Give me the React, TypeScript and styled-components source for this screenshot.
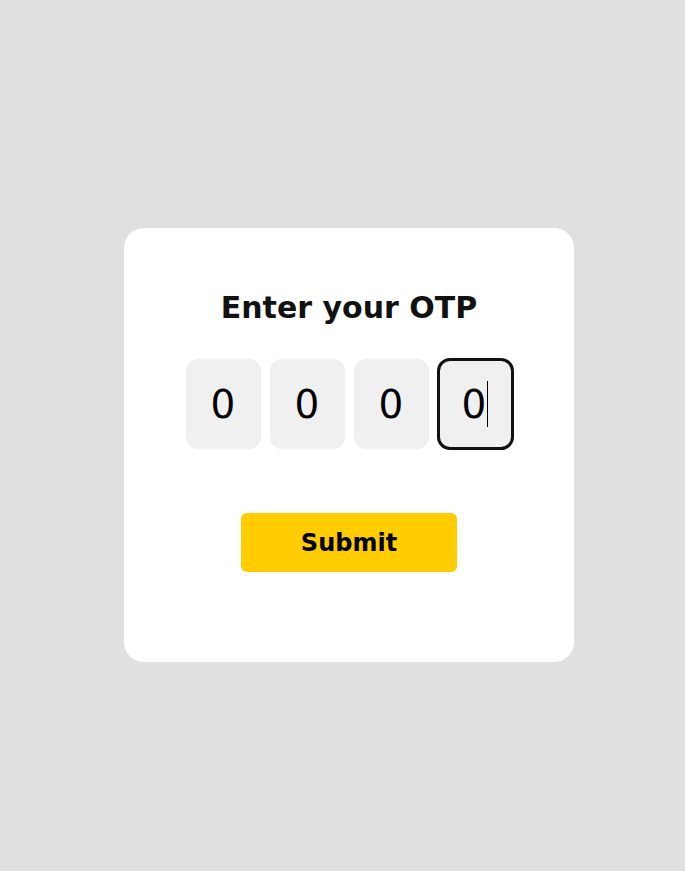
import React from "react";
import styled, { createGlobalStyle } from "styled-components";

const Global = createGlobalStyle`
  html, body { margin: 0; padding: 0; background: #e0e0e0; }
  * { box-sizing: border-box; }
`;

const Page = styled.div`
  min-height: 100vh;
  display: flex;
  align-items: center;
  justify-content: center;
  padding: 19px 0 0 13px;
  font-family: "DejaVu Sans", Verdana, sans-serif;
`;

const Card = styled.div`
  width: 450px;
  height: 434px;
  background: #ffffff;
  border-radius: 20px;
  display: flex;
  flex-direction: column;
  align-items: center;
  padding-top: 62px;
`;

const Title = styled.h2`
  margin: 0;
  font-size: 30px;
  font-weight: bold;
  color: #111;
  line-height: 35px;
`;

const Row = styled.div`
  display: flex;
  gap: 9px;
  margin-top: 34px;
`;

const Digit = styled.div<{ $focused?: boolean }>`
  width: 75px;
  height: 90px;
  border-radius: 12px;
  background: #f0f0f0;
  display: flex;
  align-items: center;
  justify-content: center;
  font-size: 39px;
  color: #000;
  outline: ${(p) => (p.$focused ? "3px solid #111" : "none")};
  outline-offset: -2px;
`;

const Caret = styled.span`
  display: inline-block;
  width: 1px;
  height: 46px;
  background: #000;
  margin-left: 1px;
`;

const Button = styled.button`
  margin-top: 64px;
  width: 216px;
  height: 59px;
  border: none;
  border-radius: 6px;
  background: #ffcc00;
  color: #000;
  font-family: "DejaVu Sans", Verdana, sans-serif;
  font-weight: bold;
  font-size: 24px;
  cursor: pointer;
`;

export default function App() {
  return (
    <>
      <Global />
      <Page>
        <Card>
          <Title>Enter your OTP</Title>
          <Row>
            <Digit>0</Digit>
            <Digit>0</Digit>
            <Digit>0</Digit>
            <Digit $focused>
              0<Caret />
            </Digit>
          </Row>
          <Button>Submit</Button>
        </Card>
      </Page>
    </>
  );
}
